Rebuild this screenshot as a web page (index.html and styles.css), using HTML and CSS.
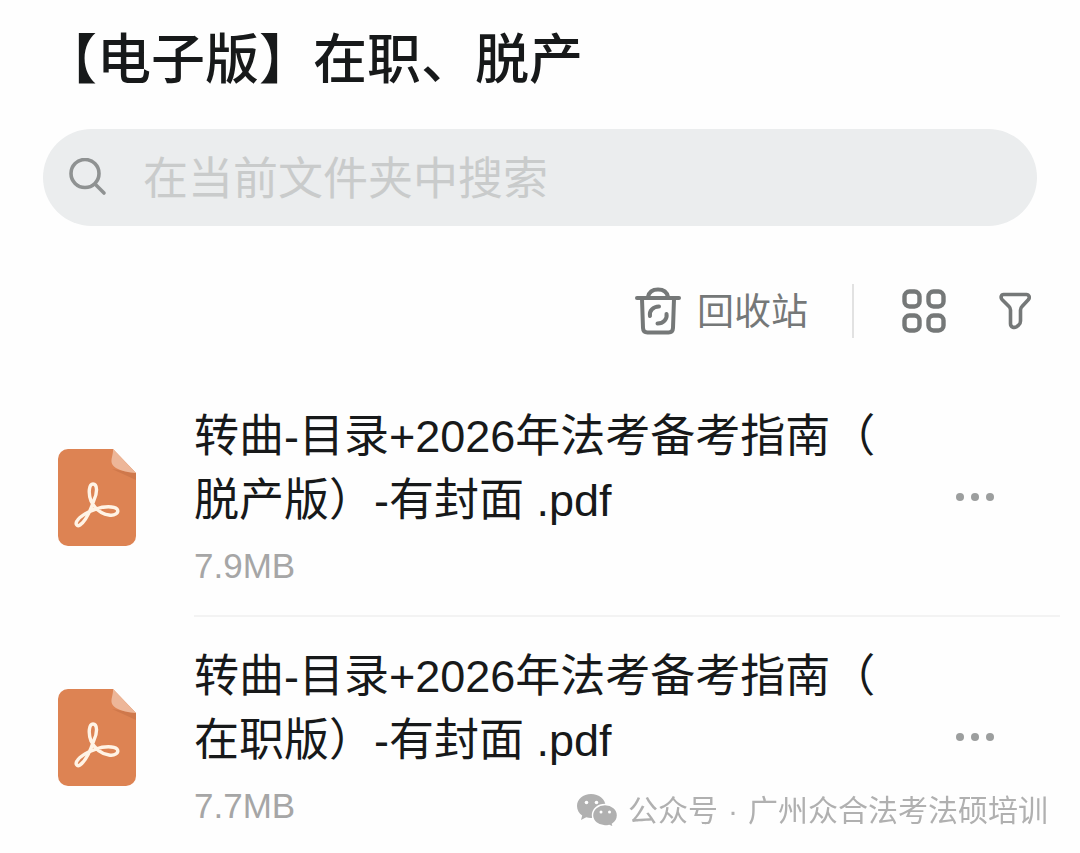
FILE: index.html
```html
<!DOCTYPE html>
<html lang="zh-CN">
<head>
  <meta charset="UTF-8">
  <meta name="viewport" content="width=device-width, initial-scale=1">
  <title>【电子版】在职、脱产</title>
  <link rel="stylesheet" href="styles.css">
</head>
<body>

  <header class="folder-header">
    <h1>【电子版】在职、脱产</h1>
    <form class="search" role="search">
      <label for="searchInput" aria-label="搜索">
        <svg class="search-icon" width="40" height="40" viewBox="0 0 40 40" fill="none" stroke="#8f9292" stroke-width="3.6" stroke-linecap="round">
          <circle cx="17" cy="15.500" r="14"/>
          <path d="M27.500 26.500l8.500 8.500"/>
        </svg>
      </label>
      <input type="search" id="searchInput" placeholder="在当前文件夹中搜索">
    </form>
  </header>

  <main>
    <!-- 工具栏 -->
    <div class="toolbar">
      <button type="button" class="recycle">
        <svg width="46" height="48" viewBox="0 0 46 48" fill="none" stroke="#757878" stroke-width="4" stroke-linecap="round" stroke-linejoin="round">
          <path d="M2 11h42"/>
          <path d="M13 10c1-5 5-7.500 10-7.500s9 2.500 10 7.500"/>
          <path d="M7 12l1 29c.1 3 1.500 4.500 4.500 4.500h21c3 0 4.400-1.500 4.500-4.500l1-29"/>
          <path d="M15 29c-1-5 3-9.500 9-9.500M31.500 27c1 5-3 9.500-9 9.500" stroke-width="4"/>
        </svg>
        <span>回收站</span>
      </button>
      <span class="divider"></span>
      <button type="button" aria-label="网格视图">
        <svg width="44" height="44" viewBox="0 0 44 44" fill="none" stroke="#757878" stroke-width="4.400">
          <rect x="2.500" y="2.500" width="15" height="15" rx="5"/>
          <rect x="26.500" y="2.500" width="15" height="15" rx="5"/>
          <rect x="2.500" y="26.500" width="15" height="15" rx="5"/>
          <rect x="26.500" y="26.500" width="15" height="15" rx="5"/>
        </svg>
      </button>
      <button type="button" class="filter" aria-label="筛选">
        <svg width="32" height="38" viewBox="0 0 32 38" fill="none" stroke="#757878" stroke-width="3.600" stroke-linejoin="round">
          <path d="M4.500 2.500h23c2.500 0 3.500 3 2 5l-6.500 7c-1 1-1.500 2-1.500 3.500v11c0 2-.6 3.300-2 4.300l-2 1.400c-2.500 1.600-6 .3-6-3v-13.700c0-1.500-.5-2.500-1.500-3.500l-7-7c-1.600-2-.9-5 1.500-5z"/>
        </svg>
      </button>
    </div>

    <!-- 文件列表 -->
    <ul class="file-list">
      <li class="file">
        <svg class="file-icon" width="78" height="97" viewBox="0 0 78 97">
          <path d="M10 0h45l23 24v63a10 10 0 0 1-10 10H10A10 10 0 0 1 0 87V10A10 10 0 0 1 10 0z" fill="#dd8353"/>
          <path d="M54 20l24 11v-7z" fill="#cf784b"/>
          <path d="M55 0l23 24c-7-.5-15-2-20-5-5-3-5-7-4-11 .6-3 1.200-5 1-8z" fill="#edb698"/>
          <path d="M33 52C30 44 31 35 35 35C39.500 35 39.500 44 36 51C33 60 28 72 22 76C19 78 17 75 19 72C22 67 31 62 38 60C46 57 56 57 59 60C62 64 56 67 51 66C44 65 37 60 33 52z" fill="none" stroke="#fff3e5" stroke-width="3.400" stroke-linejoin="round"/>
        </svg>
        <div class="file-body">
          <div class="file-info">
            <h2>转曲-目录+2026年法考备考指南（脱产版）-有封面 .pdf</h2>
            <p>7.9MB</p>
          </div>
          <button type="button" class="more" aria-label="更多">
            <svg width="40" height="10" viewBox="0 0 40 10" fill="#9c9e9e">
              <circle cx="5" cy="5" r="4"/>
              <circle cx="20" cy="5" r="4"/>
              <circle cx="35" cy="5" r="4"/>
            </svg>
          </button>
        </div>
      </li>
      <li class="file">
        <svg class="file-icon" width="78" height="97" viewBox="0 0 78 97">
          <path d="M10 0h45l23 24v63a10 10 0 0 1-10 10H10A10 10 0 0 1 0 87V10A10 10 0 0 1 10 0z" fill="#dd8353"/>
          <path d="M54 20l24 11v-7z" fill="#cf784b"/>
          <path d="M55 0l23 24c-7-.5-15-2-20-5-5-3-5-7-4-11 .6-3 1.200-5 1-8z" fill="#edb698"/>
          <path d="M33 52C30 44 31 35 35 35C39.500 35 39.500 44 36 51C33 60 28 72 22 76C19 78 17 75 19 72C22 67 31 62 38 60C46 57 56 57 59 60C62 64 56 67 51 66C44 65 37 60 33 52z" fill="none" stroke="#fff3e5" stroke-width="3.400" stroke-linejoin="round"/>
        </svg>
        <div class="file-body">
          <div class="file-info">
            <h2>转曲-目录+2026年法考备考指南（在职版）-有封面 .pdf</h2>
            <p>7.7MB</p>
          </div>
          <button type="button" class="more" aria-label="更多">
            <svg width="40" height="10" viewBox="0 0 40 10" fill="#9c9e9e">
              <circle cx="5" cy="5" r="4"/>
              <circle cx="20" cy="5" r="4"/>
              <circle cx="35" cy="5" r="4"/>
            </svg>
          </button>
        </div>
      </li>
    </ul>
  </main>

  <!-- 公众号水印 -->
  <div class="watermark">
    <svg width="41" height="34" viewBox="0 0 41 34">
      <path d="M14 0C6 0 0 5.300 0 12c0 4 2 7.300 5.200 9.500L4 26l5.200-2.800c1.500.5 3.200.8 4.800.8 8 0 14.500-5.300 14.500-12S22 0 14 0z" fill="#b0b0b0"/>
      <path d="M28 10.500c-7 0-12.500 4.700-12.500 10.700S21 32 28 32c1.500 0 3-.2 4.300-.6L36.500 33.500l-1-3.500c3-2 5-5.200 5-8.800 0-6-5.500-10.700-12.500-10.700z" fill="#b0b0b0" stroke="#fff" stroke-width="1.400"/>
      <circle cx="9.500" cy="8.500" r="1.800" fill="#fff"/>
      <circle cx="19.500" cy="8.500" r="1.800" fill="#fff"/>
      <circle cx="24" cy="18" r="1.500" fill="#fff"/>
      <circle cx="32.500" cy="18" r="1.500" fill="#fff"/>
    </svg>
    <span>公众号</span>
    <span>·</span>
    <span>广州众合法考法硕培训</span>
  </div>

</body>
</html>
```
FILE: styles.css
```css
/* 变量与基础样式 */
:root {
  --text-color: #17191a;
  --icon-color: #757878;
  --muted-color: #a6a6a6;
  --search-background: #ebedee;
  --line-color: #f3f3f3;
  --font-family: "Liberation Sans", "Noto Sans CJK SC", sans-serif;
}
* {
  box-sizing: border-box;
}
body {
  margin: 0;
  font-family: var(--font-family);
  background-color: #fefefe;
  color: var(--text-color);
}
button {
  display: flex;
  align-items: center;
  padding: 0;
  border: none;
  background: none;
  font-family: inherit;
  color: inherit;
  cursor: pointer;
}
h1, h2, p {
  margin: 0;
}
/* 标题与搜索 */
.folder-header {
  padding: 28px 43px 0;
}
.folder-header h1 {
  font-size: 54px;
  font-weight: 500;
  line-height: 64px;
}
.search {
  display: flex;
  align-items: center;
  gap: 35px;
  height: 97px;
  margin-top: 37px;
  padding: 0 25px;
  border-radius: 49px;
  background-color: var(--search-background);
}
.search label, .search-icon {
  display: block;
}
.search input {
  flex: 1;
  min-width: 0;
  height: 68px;
  padding: 4px 0 0;
  border: none;
  outline: none;
  background: none;
  font-family: inherit;
  font-size: 45px;
  color: var(--text-color);
}
.search input::placeholder {
  color: #c9cbcb;
  opacity: 1;
}
/* 工具栏 */
.toolbar {
  display: flex;
  align-items: center;
  justify-content: flex-end;
  height: 54px;
  margin-top: 58px;
  padding-right: 49px;
}
.toolbar .recycle {
  gap: 16px;
  font-size: 37px;
  line-height: 50px;
  color: var(--icon-color);
}
.toolbar .recycle span {
  padding-top: 4px;
}
.divider {
  width: 2px;
  height: 54px;
  margin: 0 48px 0 44px;
  background-color: #e2e2e2;
}
.toolbar .filter {
  margin-left: 53px;
}
/* 文件列表 */
.file-list {
  margin: 39px 0 0;
  padding: 0 20px 0 58px;
  list-style: none;
}
.file {
  display: flex;
  align-items: center;
  gap: 58px;
}
.file-icon {
  flex: none;
}
.file-body {
  flex: 1;
  display: flex;
  align-items: center;
  justify-content: space-between;
  padding: 28px 65px 26px 0;
  border-bottom: 2px solid var(--line-color);
}
.file:last-child .file-body {
  border-bottom-color: transparent;
}
.file-info {
  max-width: 700px;
}
.file-info h2 {
  font-size: 45px;
  font-weight: 400;
  line-height: 64px;
  line-break: anywhere;
}
.file-info p {
  margin-top: 10px;
  font-size: 35px;
  line-height: 46px;
  color: var(--muted-color);
}
/* 水印 */
.watermark {
  position: fixed;
  right: 32px;
  bottom: 20px;
  display: flex;
  align-items: center;
  gap: 10px;
  font-size: 30px;
  line-height: 44px;
  color: #b0b0b0;
}
```
